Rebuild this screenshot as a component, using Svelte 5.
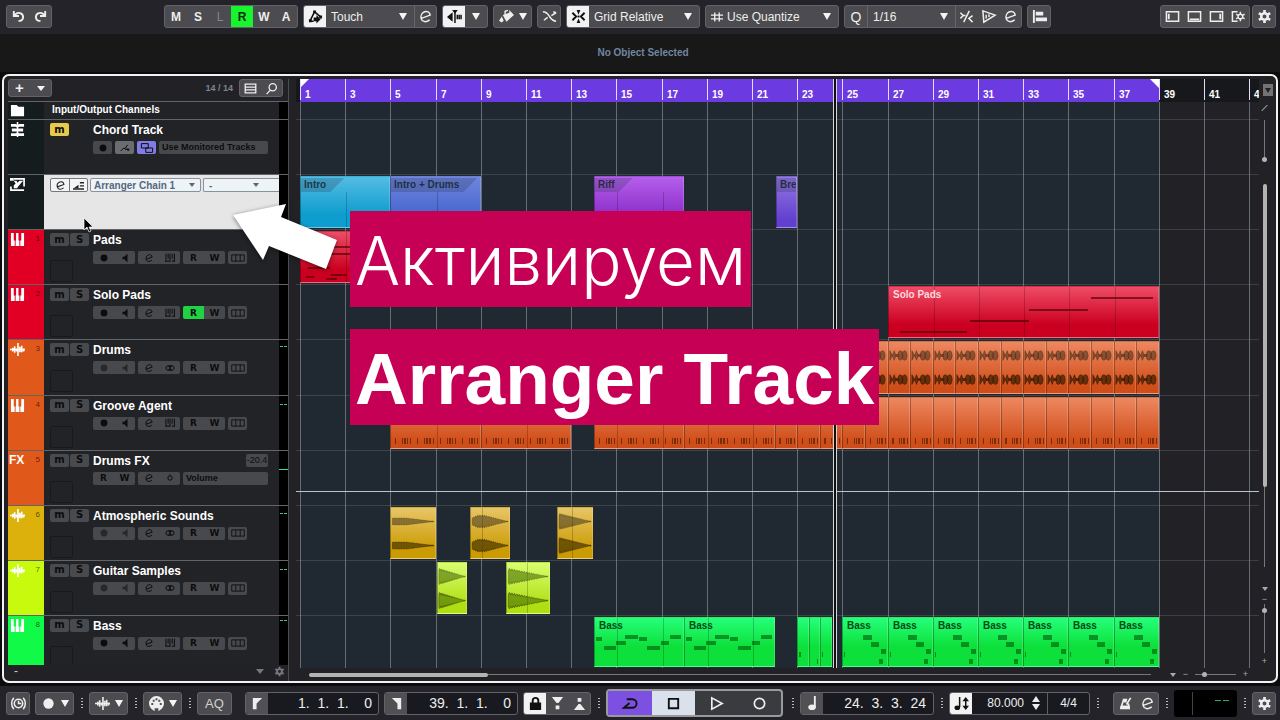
<script>
  // stroke (s), stroke width (w) and fill (f) shapes on a 16 unit grid
  const icons = {
    undo: { w: 2, s: 'M3 2v5.500h5.500M3.500 7.500C5 4.500 8 3.500 10.500 4.700c3.300 1.600 3.300 6.600-.5 8H8' },
    redo: { w: 2, s: 'M13 2v5.500H7.500M12.500 7.500C11 4.500 8 3.500 5.500 4.700c-3.300 1.600-3.300 6.600.5 8H8' },
    edit: { s: 'M3.500 10L13 6.500C12.500 3 9.500 2 7 3C4 4.200 2.500 7.500 3.500 10.500C4.500 14 8.500 14.500 12.500 11.500' },
    touch: { s: 'M2 13L7 3L14 9M2 13h4', f: 'M5.500 1.500h3v3h-3zM1 11h3v3H1zM12 7h3v3h-3zM6 9h3V6.500l4.500 4.500L9 15.500V13H6z' },
    snapLeft: { s: 'M8.500 3v12M11 6v5M13 6v5M15 6v5', f: 'M0 8.500l6-5v10zM5.500 1h6l-3 4z' },
    paint: { w: 1.5, s: 'M6.500 6V2.500l3-1', f: 'M4 6.500L11 4V1l5 5.500-8 7zM0 12.500l3-4.500 2 4.500-2 2z' },
    curve: { s: 'M1 3c4 0 5 2 7 5s4 5 7 5M10 7l5-3M15 4l-3-1M6 9l-4 3' },
    snap: { w: 2, s: 'M1.500 4l4 4-4 4M14.500 4l-4 4 4 4M8 7v2', f: 'M6 1h4L8 6zM6 15h4L8 10z' },
    hash: { w: 1.8, s: 'M5 2v12M11 2v12M0 5.500h16M0 10.500h16' },
    swing: { s: 'M11 2L5 14M1.500 4l3 3-3 3M5 7h2M14.500 7l-4 3 4 4' },
    iterate: { s: 'M2 2l13 4.500L3 14zM5.500 6v4M8.500 5.500v3' },
    align: { s: 'M2 1v14', w: 2, f: 'M4 3h8v4H4zM4 9h12v4H4z' },
    zoneLeft: { s: 'M1.500 3h13v10h-13z', f: 'M3 5h2v6H3z' },
    zoneLow: { s: 'M1.500 3h13v10h-13z', f: 'M3 10h10v2H3z' },
    zoneRight: { s: 'M1.500 3h13v10h-13z', f: 'M11 5h2v6h-2z' },
    zoneSetup: { s: 'M7 3H1.500v10H7M10 5.500a2.500 2.500 0 1 1 0 5a2.500 2.500 0 1 1 0-5M10 3v2M10 11v2M13 6.500l1.500-1M13 9.500l1.500 1M7 6.500l-1.500-1M7 9.500l-1.500 1' },
    gear: { w: 2.8, s: 'M8 4.500a3.500 3.500 0 1 1 0 7a3.500 3.500 0 1 1 0-7M8 1v3M8 12v3M2 4.500l2.500 1.500M11.500 10l2.500 1.500M14 4.500L11.500 6M4.500 10L2 11.500' },
    list: { s: 'M1.500 2.500h13v11h-13zM2 6.200h12M2 9.800h12' },
    search: { s: 'M9.500 2a4.500 4.500 0 1 1 0 9a4.500 4.500 0 1 1 0-9M6.500 10L2 15' },
    folder: { f: 'M1 2h6l2 2h6v10H1z' },
    chord: { s: 'M8 0v16', f: 'M1 2h5l2 1 2-1h5v3h-5L8 6 6 5H1zM2 7h12v3H2zM1 12h5l2-1 2 1h5v3H1z' },
    arranger: { w: 1.8, s: 'M1 10v4h14M4 2h11v8', f: 'M0 1h4v3H0zM4 4h3l1 2 2-2h4L8 11v1H4V9l2-2z' },
    piano: { f: 'M1 1h3v8h1v6H1zM6.500 1H9v8h1v6H6V9h.5zM12 1h3v14h-4V9h1z' },
    wave: { w: 1.7, s: 'M0 8h16M3 6v4M5 4.500v7M7 7v3M8.500 1v14M10.500 5v6M12.500 4v7M14.500 7v3' },
    keys: { s: 'M1.500 1v13M5 1v8M8 1v13M11.500 1v8M15 1v13M1 13h7M11 13h4' },
    rec: { f: 'M8 2.500a5.500 5.500 0 1 1 0 11a5.500 5.500 0 1 1 0-11' },
    speaker: { f: 'M4 6h3l5-5v14L7 10H4z' },
    stereo: { s: 'M5 4.500a3.500 3.500 0 1 1 0 7a3.500 3.500 0 1 1 0-7M11 4.500a3.500 3.500 0 1 1 0 7a3.500 3.500 0 1 1 0-7M5 4.500h6M5 11.500h6' },
    mono: { s: 'M8 4.500a3.500 3.500 0 1 1 0 7a3.500 3.500 0 1 1 0-7M8 2v2' },
    lanes: { w: 1.4, s: 'M-2 3h20v10H-2zM4.500 3v10M11.500 3v10' },
    link: { s: 'M-1 1h11v7H-1zM6 8h11v7H6z' },
    lines: { s: 'M1 13l5-5 2 1 4-6M8 10h5', f: 'M10 9h6l-3 4z' },
    steps: { w: 2, s: 'M0 13h16M10 4h6M10 8.500h6', f: 'M1 12l7-5v5z' },
    clock: { s: 'M8 3.500a4.500 4.500 0 1 1 0 9a4.500 4.500 0 1 1 0-9M8 5v3h3M3 2C0 5 0 11 3 14M13 2c3 3 3 9 0 12' },
    midi: { f: 'M8 0a8 8 0 1 1 0 16a8 8 0 1 1 0-16zM2.500 7.500v2h2v-2zM11.500 7.500v2h2v-2zM4 4v2h2V4zM10 4v2h2V4zM7 2.500v2h2v-2zM6 13v3h4v-3z' },
    flagLeft: { f: 'M3 2h10L7 8v6H3z' },
    flagRight: { f: 'M3 2h10v12H9V8z' },
    lock: { w: 2, s: 'M5 8V5a3 3 0 0 1 6 0v3', f: 'M2 7h12v8H2z' },
    punchIn: { f: 'M2 1h12L9 7.500H7zM6 10h4v4H6z' },
    punchOut: { f: 'M2 15h12L9 8.500H7zM6 2h4v4H6z' },
    cycle: { w: 2, s: 'M4 3.500h6a4.500 4.500 0 0 1 0 9H1L7 7.500' },
    stop: { w: 2, s: 'M3 3h10v10H3z' },
    play: { w: 1.8, s: 'M3 2l11 6-11 6z' },
    record: { w: 1.8, s: 'M8 2.500a5.500 5.500 0 1 1 0 11a5.500 5.500 0 1 1 0-11' },
    note: { w: 2, s: 'M10.500 0v12', f: 'M11.500 12a4 3 0 1 1-8 0a4 3 0 1 1 8 0' },
    tempo: { s: 'M6 1v11M12.500 4v8', f: 'M6.500 12.500a3 2.500 0 1 1-6 0a3 2.500 0 1 1 6 0M9 5.500l3.500-4.500L16 5.500zM9 10.500l3.500 4.500 3.500-4.500z' },
    metronome: { w: 1.8, s: 'M6 4L3 13M13.500 2L9 9M11 8l1 5', f: 'M5 3h5l-1 4H6zM3 10h9l1 4H2z' },
  }

  const tracks = [
    { no: 1, name: 'Pads', type: 'midi', color: 'red', meter: 0 },
    { no: 2, name: 'Solo Pads', type: 'midi', color: 'red', meter: 0, read: true },
    { no: 3, name: 'Drums', type: 'audio', color: 'orange', meter: 6 },
    { no: 4, name: 'Groove Agent', type: 'midi', color: 'orange', meter: 8 },
    { no: 5, name: 'Drums FX', type: 'fx', color: 'orange', meter: 18 },
    { no: 6, name: 'Atmospheric Sounds', type: 'audio', color: 'amber', meter: 7 },
    { no: 7, name: 'Guitar Samples', type: 'audio', color: 'lime', meter: 8 },
    { no: 8, name: 'Bass', type: 'midi', color: 'green', meter: 4 },
  ]

  const bars = Array.from({ length: 22 }, (_, i) => i * 2 + 1)
  const barX = (bar) => 4 + Math.round(((bar - 1) * 113) / 5)
  const span = (a, b, step = 1) =>
    Array.from({ length: Math.round((b - a) / step) }, (_, i) => [a + i * step, a + (i + 1) * step])

  // notes: left %, top px, width %
  const soloNotes = [[4, 44, 25], [30, 33, 22], [52, 22, 22], [75, 10, 23]]
  const padNotes = [[10, 14, 30], [14, 21, 40], [3, 44, 4], [4, 35, 12], [17, 42, 8], [14, 46, 6], [30, 26, 12]]
  const bassLong = [[1, 19, 7], [10, 28, 14], [24, 23, 11], [34, 17, 15], [50, 19, 9], [59, 28, 15], [75, 23, 9], [85, 17, 13]]
  const bassShort = [[45, 17, 20], [63, 24, 18], [87, 31, 10], [81, 41, 9], [3, 34, 2]]

  const ev = (lane, a, b, kind, label = '', extra = {}) => ({ lane, a, b, kind, label, ...extra })

  const events = [
    ev(2, 1, 5, 'sky', 'Intro', { tab: true }),
    ev(2, 5, 9, 'blue', 'Intro + Drums', { tab: true }),
    ev(2, 14, 18, 'violet', 'Riff', { tab: true }),
    ev(2, 22.05, 23, 'purple', 'Bre', { tab: true }),
    ev(3, 1, 9, 'red', '', { notes: padNotes }),
    ev(4, 27, 39, 'red', 'Solo Pads', { notes: soloNotes }),
    ...span(5, 39).map(([a, b]) => ev(5, a, b, 'orange', '', { beat: true })),
    ev(6, 5, 9, 'orange', '', { hits: 8 }),
    ev(6, 9, 13, 'orange', '', { hits: 8 }),
    ev(6, 14, 18, 'orange', '', { hits: 8 }),
    ev(6, 18, 22, 'orange', '', { hits: 8 }),
    ...span(22, 39).map(([a, b]) => ev(6, a, b, 'orange', '', { hits: 2 })),
    ev(8, 5, 7, 'amber', '', { env: 'soft' }),
    ev(8, 8.5, 10.3, 'amber', '', { env: 'swell' }),
    ev(8, 12.35, 13.95, 'amber', '', { env: 'pluck' }),
    ev(9, 7.05, 8.4, 'lime', '', { env: 'pluck' }),
    ev(9, 10.1, 12.05, 'lime', '', { env: 'pluck' }),
    ev(10, 14, 18, 'green', 'Bass', { notes: bassLong }),
    ev(10, 18, 22, 'green', 'Bass', { notes: bassLong }),
    ev(10, 23, 23.5, 'green', '', { notes: [[12, 34, 14]], tall: true }),
    ev(10, 23.5, 24, 'green', '', { notes: [[75, 41, 18]], tall: true }),
    ev(10, 24, 24.55, 'green', '', { notes: [[12, 34, 12]], tall: true }),
    ...span(25, 39, 2).map(([a, b]) => ev(10, a, b, 'green', 'Bass', { notes: bassShort, tall: true })),
  ]

  const innerBars = (e) => bars.filter((b) => b > e.a + 0.2 && b < e.b - 0.2)

  // decaying waveform outline around y = mid, 100 units wide
  function envelope(kind, mid) {
    const top = []
    const bottom = []
    for (let i = 0; i <= 48; i++) {
      const t = i / 48
      const jag = i % 3 ? 1 : 0.72
      let amp = 8.5 * (1 - t) * jag
      if (kind === 'soft') amp = 3.6 * (1 - Math.max(0, t - 0.35) / 0.65) * (i % 3 ? 1 : 0.85)
      if (kind === 'swell') amp = 6.5 * Math.min(1, 0.6 + t * 2.5) * (t < 0.35 ? 1 : (1 - t) / 0.65) * jag
      amp = Math.max(0.5, amp)
      const x = 3 + t * 94
      top.push(`${x.toFixed(1)} ${(mid - amp).toFixed(1)}`)
      bottom.unshift(`${x.toFixed(1)} ${(mid + amp).toFixed(1)}`)
    }
    return `M${top.join('L')}L${bottom.join('L')}Z`
  }

  const beatPath = (y) =>
    `M1 ${y - 5}l3 5-3 5zM4 ${y}l2-5 2 5-2 5zM8 ${y - 1}h3v2h-3z` +
    `M10 ${y}l1-4 2-1 2 1 1 4-1 4-2 1-2-1zM15 ${y}l1-4 2-1 2 1 1 4-1 4-2 1-2-1z`

  const dots = [1, 2, 3, 4]
</script>

{#snippet icon(name, cls = '')}
  <svg class="icon {cls}" viewBox="0 0 16 16" aria-hidden="true">
    {#if icons[name].s}<path class="line" stroke-width={icons[name].w ?? 1.6} d={icons[name].s} />{/if}
    {#if icons[name].f}<path class="solid" fill-rule="evenodd" d={icons[name].f} />{/if}
  </svg>
{/snippet}

{#snippet btn(name, label, cls = '')}
  <button class="tool {cls}" aria-label={label}>{@render icon(name)}</button>
{/snippet}

{#snippet grip()}
  <span class="grip">{#each dots as d (d)}<i></i>{/each}</span>
{/snippet}

{#snippet pair(a, b, cls = '')}
  <div class="pair {cls}">
    <button aria-label={a}>{@render icon(a)}</button>
    <button aria-label={b}>{@render icon(b)}</button>
  </div>
{/snippet}

<div class="daw">
  <header class="toolbar">
    <div class="group">
      {@render btn('undo', 'Undo')}
      {@render btn('redo', 'Redo')}
    </div>
    <div class="group states">
      {#each ['M', 'S', 'L', 'R', 'W', 'A'] as s (s)}
        <button class="tool" class:on={s === 'R'} class:dim={s === 'L'}>{s}</button>
      {/each}
    </div>
    <div class="group">
      {@render btn('touch', 'Automation follows events', 'lit')}
      <label class="drop"><select aria-label="Automation mode"><option>Touch</option></select></label>
      {@render btn('edit', 'Automation panel', 'sep')}
    </div>
    <div class="group">
      {@render btn('snapLeft', 'Auto-scroll', 'lit')}
      <button class="tool" aria-label="Auto-scroll options"><span class="tri"></span></button>
    </div>
    <div class="group">
      <button class="tool wide" aria-label="Colorize">{@render icon('paint')}<span class="tri"></span></button>
    </div>
    <div class="group">{@render btn('curve', 'Snap to zero crossing')}</div>
    <div class="group">
      {@render btn('snap', 'Snap', 'lit')}
      <label class="drop long"><select aria-label="Snap type"><option>Grid Relative</option></select></label>
    </div>
    <div class="group">
      <label class="drop grid">{@render icon('hash')}<select aria-label="Grid type"><option>Use Quantize</option></select></label>
    </div>
    <div class="group">
      <button class="tool q">Q</button>
      <label class="drop sep"><select aria-label="Quantize preset"><option>1/16</option></select></label>
      {@render btn('swing', 'Soft quantize', 'sep')}
      {@render btn('iterate', 'Iterative quantize')}
      {@render btn('edit', 'Quantize panel')}
    </div>
    <div class="group">{@render btn('align', 'Audio alignment')}</div>
    <div class="group right">
      {@render btn('zoneLeft', 'Left zone')}
      {@render btn('zoneLow', 'Lower zone')}
      {@render btn('zoneRight', 'Right zone')}
      {@render btn('zoneSetup', 'Window layout')}
    </div>
    <div class="group last">{@render btn('gear', 'Set up toolbar')}</div>
  </header>

  <div class="info">No Object Selected</div>

  <main class="project">
    <section class="list">
      <div class="list-head">
        <div class="group small">
          <button class="tool" aria-label="Add track"><span class="plus">+</span></button>
          <button class="tool" aria-label="Track presets"><span class="tri flat"></span></button>
        </div>
        <span class="count">14 / 14</span>
        <div class="group small">
          {@render btn('list', 'Track visibility')}
          {@render btn('search', 'Find tracks')}
        </div>
      </div>

      <ul class="tracks">
        <li class="track io">
          <div class="strip dark">{@render icon('folder')}</div>
          <div class="body"><h2>Input/Output Channels</h2></div>
          <div class="meter"></div>
        </li>
        <li class="track">
          <div class="strip dark">{@render icon('chord')}</div>
          <div class="body">
            <button class="mute">m</button>
            <div class="main">
              <h2>Chord Track</h2>
              <div class="controls">
                <button class="chip" aria-label="Record">{@render icon('rec')}</button>
                <button class="chip light" aria-label="Lines">{@render icon('lines')}</button>
                <button class="chip active" aria-label="Linked">{@render icon('link')}</button>
                <button class="field">Use Monitored Tracks</button>
              </div>
            </div>
          </div>
          <div class="meter"></div>
        </li>
        <li class="track selected">
          <div class="strip dark">{@render icon('arranger')}</div>
          <div class="body">
            <div class="chain-tools">
              <button aria-label="Edit chain">{@render icon('edit')}</button>
              <button aria-label="Activate arranger">{@render icon('steps')}</button>
            </div>
            <label class="chain"><select aria-label="Chain"><option>Arranger Chain 1</option></select></label>
            <label class="chain jump"><select aria-label="Jump mode"><option>-</option></select></label>
          </div>
          <div class="meter"></div>
        </li>
        {#each tracks as t (t.no)}
          <li class="track">
            <div class="strip {t.color}">
              {#if t.type === 'fx'}<b>FX</b>{:else}{@render icon(t.type === 'midi' ? 'piano' : 'wave')}{/if}
              <small>{t.no}</small>
            </div>
            <div class="body">
              <div class="side">
                <div class="ms"><button>m</button><button>S</button></div>
                <div class="thumb"></div>
              </div>
              <div class="main">
                <div class="title"><h2>{t.name}</h2>{#if t.type === 'fx'}<output>-20.4</output>{/if}</div>
                <div class="controls">
                  {#if t.type !== 'fx'}
                    {@render pair('rec', 'speaker', t.type === 'audio' ? 'off' : '')}
                    {@render pair('edit', t.type === 'midi' ? 'keys' : 'stereo')}
                  {/if}
                  <div class="pair rw"><button class:read={t.read}>R</button><button>W</button></div>
                  {#if t.type === 'fx'}
                    {@render pair('edit', 'mono')}
                    <button class="field">Volume</button>
                  {:else}
                    <button class="chip" aria-label="Lanes">{@render icon('lanes')}</button>
                  {/if}
                </div>
              </div>
            </div>
            <div class="meter">
              {#if t.meter}<span class="level" class:solid={t.type === 'fx'} style:margin-top="{t.meter}px"></span>{/if}
            </div>
          </li>
        {/each}
      </ul>
      <div class="list-foot">
        <span>-</span>
        <span class="tri flat faint"></span>
        {@render icon('gear')}
      </div>
    </section>

    <section class="timeline">
      <div class="ruler">
        <div class="cycle" style:left="{barX(1)}px" style:width="{barX(39) - barX(1)}px"></div>
        {#each bars as bar (bar)}
          <span class="tick" style:left="{barX(bar)}px">{bar}</span>
        {/each}
      </div>
      <div class="arrange">
        <div class="zone" style:left="{barX(1)}px" style:width="{barX(39) - barX(1)}px"></div>
        {#each bars as bar (bar)}
          <div class="gridline" style:left="{barX(bar)}px"></div>
        {/each}
        <div class="lanes">
          {#each { length: 11 } as _, lane}
            <div class="lane">
              {#each events.filter((e) => e.lane === lane) as e}
                <div
                  class="event {e.kind}"
                  class:tall={e.tall}
                  style:left="{barX(e.a)}px"
                  style:width="{barX(e.b) - barX(e.a)}px"
                >
                  {#each innerBars(e) as b (b)}
                    <i class="split" class:low={e.tab} style:left="{barX(b) - barX(e.a)}px"></i>
                  {/each}
                  {#each e.notes ?? [] as [nx, ny, nw]}
                    <i class="note" style:left="{nx}%" style:top="{ny}px" style:width="{nw}%"></i>
                  {/each}
                  {#if e.beat}
                    <svg viewBox="0 0 23 52" preserveAspectRatio="none">
                      <path class="upper" d={beatPath(14)} /><path class="lower" d={beatPath(39)} />
                    </svg>
                  {/if}
                  {#if e.env}
                    <svg viewBox="0 0 100 52" preserveAspectRatio="none">
                      <path class="upper" d={envelope(e.env, 14)} /><path class="lower" d={envelope(e.env, 39)} />
                    </svg>
                  {/if}
                  {#if e.hits}
                    <div class="hits">
                      {#each { length: e.hits } as _, h}<span class:dense={h % 2}></span>{/each}
                    </div>
                  {/if}
                  {#if e.label}<span class="label" class:tab={e.tab}>{e.label}</span>{/if}
                </div>
              {/each}
            </div>
          {/each}
        </div>
        <div class="crosshair"></div>
      </div>
      <div class="playhead" style:left="{barX(24.6)}px"></div>
      <div class="hscroll">
        <div class="rail"><div class="grab"></div></div>
        <span class="tri flat tiny"></span>
        <button class="zoom">−</button>
        <input type="range" value="20" aria-label="Horizontal zoom" />
        <button class="zoom">+</button>
      </div>
    </section>

    <aside class="vscroll">
      <button class="presets" aria-label="Zoom presets"><span class="tri flat ink"></span></button>
      <span class="slash"></span>
      <input type="range" value="0" aria-label="Waveform zoom" />
      <div class="rail"><div class="grab"></div></div>
      <span class="tri flat tiny"></span>
      <button class="zoom">−</button>
      <input class="trackzoom" type="range" value="90" aria-label="Vertical zoom" />
      <button class="zoom">+</button>
    </aside>
  </main>

  <footer class="transport">
    <div class="group">{@render btn('clock', 'Constrain delay')}</div>
    <div class="group"><button class="tool wide" aria-label="Record mode">{@render icon('rec')}<span class="tri"></span></button></div>
    {@render grip()}
    <div class="group"><button class="tool wide" aria-label="Audio record mode">{@render icon('wave')}<span class="tri"></span></button></div>
    {@render grip()}
    <div class="group"><button class="tool wide" aria-label="MIDI record mode">{@render icon('midi')}<span class="tri"></span></button></div>
    {@render grip()}
    <div class="group"><button class="tool aq">AQ</button></div>
    <div class="group locator first">
      {@render btn('flagLeft', 'Go to left locator')}
      <input aria-label="Left locator" value="1.  1.  1.    0" />
    </div>
    <div class="group locator">
      {@render btn('flagRight', 'Go to right locator')}
      <input aria-label="Right locator" value="39.  1.  1.    0" />
    </div>
    <div class="group">
      {@render btn('lock', 'Lock punch', 'lit')}
      {@render btn('punchIn', 'Punch in')}
      {@render btn('punchOut', 'Punch out')}
    </div>
    {@render grip()}
    <div class="play">
      <button class="cycle-on" aria-label="Cycle">{@render icon('cycle')}</button>
      <button class="stopped" aria-label="Stop">{@render icon('stop')}</button>
      <button aria-label="Play">{@render icon('play')}</button>
      <button aria-label="Record">{@render icon('record')}</button>
    </div>
    {@render grip()}
    <div class="group locator position">
      {@render btn('note', 'Time format')}
      <input aria-label="Position" value="24.  3.  3.  24" />
    </div>
    {@render grip()}
    <div class="group tempo">
      {@render btn('tempo', 'Tempo track', 'lit')}
      <input aria-label="Tempo" value="80.000" />
      <span class="spin"><i></i><i></i></span>
      <input class="sig" aria-label="Time signature" value="4/4" />
    </div>
    {@render grip()}
    <div class="group first">
      {@render btn('metronome', 'Metronome')}
      {@render btn('edit', 'Metronome setup')}
    </div>
    {@render grip()}
    <div class="output"><i></i><span></span></div>
    {@render grip()}
    <div class="group last">{@render btn('gear', 'Set up transport')}</div>
  </footer>

  <svg class="pointer" viewBox="0 0 10 16" aria-hidden="true">
    <path d="M1 1v12l3-3L6 15l2-1-2-4h4z" />
  </svg>
  <svg class="arrow" viewBox="0 0 108 70" aria-hidden="true">
    <path d="M2 13L55 2L50 15L106 38L95 67L38 44L32 58Z" />
  </svg>
  <div class="caption">
    <p class="thin">Активируем</p>
    <p class="strong">Arranger Track</p>
  </div>
</div>

<style>
  :global(body) {
    background: #000;
  }

  .daw {
    position: relative;
    display: flex;
    flex-direction: column;
    min-width: 1280px;
    min-height: 100vh;
    overflow: hidden;
    font-family: 'Liberation Sans', Arial, sans-serif;
    font-size: 12px;
    color: #eee;
    background: #0b0b0c;
  }

  .daw * {
    box-sizing: border-box;
  }

  button,
  input,
  select {
    font: inherit;
    color: inherit;
    background: none;
    border: 0;
    margin: 0;
    padding: 0;
    min-width: 0;
  }

  select {
    appearance: none;
    outline: none;
  }

  h2,
  p,
  ul {
    margin: 0;
    padding: 0;
  }

  .icon {
    display: block;
    flex: none;
    width: 15px;
    height: 15px;
    overflow: visible;
  }

  .small .icon {
    width: 13px;
    height: 13px;
  }

  .icon .line {
    fill: none;
    stroke: currentColor;
  }

  .icon .solid {
    fill: currentColor;
  }

  .tri {
    border: 4px solid transparent;
    border-top: 7px solid #f4f4f4;
    border-bottom: 0;
  }

  .tri.flat {
    border-top-width: 5px;
  }

  .tri.tiny {
    border-width: 3px;
    border-top: 4px solid #aaa;
    border-bottom: 0;
  }

  .tri.faint {
    border-top-color: #77787b;
  }

  .tri.ink {
    border-top-color: #222;
  }

  /* toolbars */
  .toolbar,
  .transport {
    display: flex;
    align-items: center;
    height: 34px;
    gap: 5px;
    padding: 0 4px 0 6px;
    background: #232329;
  }

  .toolbar {
    padding-bottom: 1px;
  }

  .group {
    display: flex;
    flex: none;
    height: 23px;
    border: 1px solid #626268;
    border-radius: 3px;
    background: #4b4b50;
    overflow: hidden;
  }

  .tool {
    display: flex;
    align-items: center;
    justify-content: center;
    width: 22px;
    height: 100%;
  }

  .tool.wide {
    width: 37px;
    gap: 5px;
  }

  .tool.lit {
    background: #f2f2f2;
    color: #111;
  }

  .tool.on {
    background: #19f52c;
    color: #0a2a0c;
  }

  .tool.dim {
    color: #85858a;
    font-weight: normal;
  }

  .tool.q {
    font-size: 14px;
  }

  .sep {
    border-left: 1px solid #66666b;
  }

  .states {
    margin-left: 107px;
    font-weight: bold;
  }

  .drop {
    position: relative;
    display: flex;
    align-items: center;
    width: 88px;
    padding-left: 5px;
  }

  .drop.long {
    width: 110px;
  }

  .drop.grid {
    width: 132px;
    gap: 4px;
  }

  .drop.grid .icon {
    width: 12px;
    height: 12px;
  }

  .drop select {
    flex: 1;
  }

  .drop::after {
    content: '';
    position: absolute;
    right: 7px;
    border: 4px solid transparent;
    border-top: 7px solid #f4f4f4;
    border-bottom: 0;
    pointer-events: none;
  }

  .right {
    margin-left: auto;
  }

  .toolbar .last {
    margin-left: -3px;
  }

  .info {
    height: 38px;
    line-height: 38px;
    padding-left: 6px;
    text-align: center;
    font-size: 10px;
    font-weight: bold;
    color: #7186a0;
    background: #181818;
  }

  /* project window */
  .project {
    display: flex;
    flex: 1;
    margin: 2px 2px 3px;
    padding: 3px 0 0 4px;
    border: 2px solid #f2f2f2;
    border-radius: 7px;
    background: #222226;
    overflow: hidden;
  }

  .list {
    display: flex;
    flex-direction: column;
    width: 281px;
    border-right: 1px solid #4c4d50;
  }

  .list-head {
    display: flex;
    align-items: flex-start;
    height: 22px;
    padding-right: 5px;
  }

  .group.small {
    height: 18px;
  }

  .small .tool {
    width: 21px;
  }

  .plus {
    font-size: 15px;
    font-weight: bold;
    line-height: 14px;
  }

  .count {
    margin: 0 6px 0 auto;
    font-size: 9px;
    font-weight: bold;
    line-height: 18px;
    color: #7d8590;
  }

  .tracks {
    display: grid;
    flex: 1;
    grid-template-rows: 18px repeat(9, minmax(40px, 1fr)) 50px;
    list-style: none;
  }

  .track {
    display: flex;
    min-height: 0;
    border-top: 1px solid #626467;
    background: #222327;
    overflow: hidden;
  }

  .strip {
    display: flex;
    flex: none;
    justify-content: space-between;
    align-items: flex-start;
    width: 36px;
    padding: 2px 4px 0 2px;
    color: #fff;
  }

  .io .strip {
    padding-top: 1px;
  }

  .strip b {
    font-size: 12px;
    line-height: 15px;
    margin-left: -1px;
  }

  .strip small {
    font-size: 8px;
    line-height: 14px;
    color: rgba(0, 0, 0, 0.6);
  }

  .strip.dark {
    background: #141c1d;
  }

  .strip.red {
    background: #e10024;
  }

  .strip.orange {
    background: #e0591b;
  }

  .strip.amber {
    background: #dcb10c;
  }

  .strip.lime {
    background: #c8fa0e;
  }

  .strip.green {
    background: #12fa48;
  }

  .body {
    display: flex;
    flex: 1;
    min-width: 0;
    padding: 3px 0 0 6px;
  }

  .main {
    flex: 1;
    min-width: 0;
    padding-right: 11px;
  }

  h2 {
    font-size: 12px;
    line-height: 14px;
    color: #fff;
    white-space: nowrap;
  }

  .io .body {
    padding: 1px 0 0 8px;
  }

  .io h2 {
    font-size: 10px;
  }

  .side {
    flex: none;
    width: 43px;
  }

  .ms {
    display: flex;
    gap: 1px;
    margin-right: 4px;
  }

  .ms button,
  .mute {
    width: 19px;
    height: 13px;
    border-radius: 2px;
    background: #494a4d;
    color: #0c0c0c;
    font-family: 'DejaVu Sans', sans-serif;
    font-size: 10px;
    font-weight: bold;
    line-height: 12px;
  }

  .mute {
    flex: none;
    margin-right: 24px;
    background: #e8c94c;
  }

  .thumb {
    width: 23px;
    height: 22px;
    margin-top: 14px;
    border: 1px solid #18191b;
    border-radius: 2px;
  }

  .title {
    display: flex;
    justify-content: space-between;
  }

  output {
    width: 22px;
    height: 13px;
    display: flex;
    justify-content: center;
    border-radius: 2px;
    background: #48494c;
    color: #0c0c0c;
    font-size: 9px;
    line-height: 13px;
  }

  .controls {
    display: flex;
    gap: 3px;
    margin-top: 4px;
    height: 13px;
    color: #0c0c0c;
  }

  .pair {
    display: flex;
    width: 42px;
    border-radius: 2px;
    background: #48494c;
    overflow: hidden;
  }

  .pair button,
  .chip {
    display: flex;
    align-items: center;
    justify-content: center;
    flex: 1;
  }

  .pair .icon,
  .chip .icon {
    width: 10px;
    height: 10px;
  }

  .pair.off button {
    color: #27282a;
  }

  .rw {
    font-family: 'DejaVu Sans', sans-serif;
    font-size: 9px;
    font-weight: bold;
  }

  .read {
    background: #21d243;
  }

  .chip {
    flex: none;
    width: 19px;
    border-radius: 2px;
    background: #48494c;
  }

  .chip.light {
    background: #6b6c6f;
  }

  .chip.active {
    background: #827de6;
  }

  .field {
    flex: 1;
    padding-left: 3px;
    border-radius: 2px;
    background: #48494c;
    font-size: 9px;
    font-weight: bold;
    line-height: 13px;
    text-align: left;
    white-space: nowrap;
  }

  .selected .body {
    background: #e6e6e6;
    color: #222;
    gap: 2px;
  }

  .chain-tools {
    display: flex;
    height: 14px;
    border: 1px solid #77787b;
    border-radius: 2px;
    background: #f2f4f5;
  }

  .chain-tools button {
    display: flex;
    align-items: center;
    justify-content: center;
    width: 18px;
  }

  .chain-tools button + button {
    border-left: 1px solid #77787b;
  }

  .chain-tools .icon {
    width: 11px;
    height: 11px;
  }

  .chain {
    position: relative;
    display: flex;
    align-items: center;
    width: 111px;
    height: 14px;
    padding-left: 3px;
    border: 1px solid #8791a0;
    border-radius: 2px;
    background: #eef3f6;
    color: #56677f;
    font-size: 10px;
    font-weight: bold;
  }

  .chain select {
    flex: 1;
  }

  .chain.jump {
    flex: 1;
    padding-left: 5px;
    border-right: 0;
    border-radius: 2px 0 0 2px;
  }

  .chain::after {
    content: '';
    position: absolute;
    right: 5px;
    border: 3px solid transparent;
    border-top: 4px solid #56677f;
    border-bottom: 0;
  }

  .chain.jump::after {
    right: 20px;
  }

  .meter {
    width: 9px;
    flex: none;
    background: #000;
  }

  .level {
    display: block;
    height: 1px;
    background: repeating-linear-gradient(90deg, transparent 0 1px, #43c98a 1px 4px);
  }

  .level.solid {
    background: #35dca0;
  }

  .list-foot {
    display: flex;
    align-items: center;
    height: 16px;
    gap: 13px;
    padding: 0 3px 4px 6px;
    color: #77787b;
  }

  .list-foot span:first-child {
    margin-right: auto;
    color: #ccc;
  }

  .list-foot .icon {
    width: 11px;
    height: 11px;
    margin-left: -3px;
  }

  /* timeline */
  .timeline {
    position: relative;
    display: flex;
    flex: 1;
    flex-direction: column;
    min-width: 0;
    margin-left: 7px;
    overflow: hidden;
  }

  .ruler {
    position: relative;
    height: 23px;
    background: #17181b;
    overflow: hidden;
  }

  .cycle {
    position: absolute;
    top: 0;
    bottom: 0;
    background: #6b3ae0;
  }

  .cycle::before,
  .cycle::after {
    content: '';
    position: absolute;
    top: 0;
    left: 0;
    border-top: 9px solid #fff;
    border-right: 9px solid transparent;
  }

  .cycle::after {
    left: auto;
    right: 0;
    border-right: 0;
    border-left: 9px solid transparent;
  }

  .tick {
    position: absolute;
    top: 0;
    height: 21px;
    padding: 10px 0 0 4px;
    border-left: 1px solid #e6dcff;
    font-size: 10px;
    font-weight: bold;
    line-height: 12px;
    color: #fff;
  }

  .arrange {
    position: relative;
    display: flex;
    flex: 1;
  }

  .zone {
    position: absolute;
    top: 0;
    bottom: 0;
    background: #202931;
  }

  .gridline {
    position: absolute;
    top: 0;
    bottom: 0;
    width: 1px;
    background: #666c72;
  }

  .lanes {
    position: relative;
    display: grid;
    flex: 1;
    grid-template-rows: 17px repeat(9, minmax(40px, 1fr)) 53px;
  }

  .lane {
    position: relative;
    min-height: 0;
    border-top: 1px solid rgba(150, 165, 175, 0.22);
  }

  .lane:first-child {
    border-top: 0;
  }

  .crosshair {
    position: absolute;
    left: 0;
    right: 0;
    top: 389px;
    height: 1px;
    background: #b9c4ca;
  }

  .playhead {
    position: absolute;
    top: 0;
    bottom: 13px;
    width: 4px;
    border: 1px solid #d6d6d6;
    border-width: 0 1px;
    background: #101010;
  }

  .event {
    position: absolute;
    top: 1px;
    bottom: 1px;
    border: 1px solid rgba(255, 255, 255, 0.18);
    border-left-color: rgba(0, 0, 0, 0.3);
    overflow: hidden;
  }

  .event svg {
    position: absolute;
    inset: 0;
    width: 100%;
    height: 100%;
  }

  .upper {
    fill: rgba(50, 40, 25, 0.5);
    stroke: rgba(40, 30, 10, 0.6);
    stroke-width: 0.6;
  }

  .lower {
    fill: rgba(60, 30, 0, 0.7);
    stroke: rgba(40, 20, 0, 0.9);
    stroke-width: 0.6;
  }

  .lime .upper,
  .lime .lower {
    fill: rgba(60, 100, 0, 0.55);
  }

  .amber .lower {
    fill: rgba(80, 60, 0, 0.75);
  }

  .event.sky {
    background: linear-gradient(#54bce2, #0e9dcf 75%);
  }

  .event.blue {
    background: linear-gradient(#7086dc, #4666cf 75%);
  }

  .event.violet {
    background: linear-gradient(#b55fec, #8729c4 85%);
  }

  .event.purple {
    background: linear-gradient(#9478e4, #6140cf 85%);
  }

  .event.red {
    background: linear-gradient(#ee4c66, #cb0020 75%);
  }

  .event.orange {
    background: linear-gradient(#ed8760, #cf4d18 88%);
  }

  .event.amber {
    background: linear-gradient(#e8c566, #ca9b02 85%);
  }

  .event.lime {
    background: linear-gradient(#d9fd70, #aedf10 85%);
  }

  .event.green {
    background: linear-gradient(#25ff7a, #0de03a 60%);
  }

  .split {
    position: absolute;
    top: 0;
    bottom: 0;
    width: 1px;
    background: rgba(0, 0, 0, 0.2);
  }

  .split.low {
    top: 15px;
  }

  .note {
    position: absolute;
    height: 4px;
    background: rgba(80, 0, 0, 0.65);
  }

  .red .note {
    height: 2px;
  }

  .green .note {
    background: rgba(0, 90, 10, 0.6);
  }

  .tall .note {
    height: 5px;
  }

  .hits {
    position: absolute;
    inset: auto 0 4px 0;
    display: flex;
    height: 6px;
  }

  .hits span {
    flex: 1;
    background: linear-gradient(
      90deg,
      transparent 35%,
      #7a2d08 35% 47%,
      transparent 47%
    );
  }

  .hits .dense {
    background: linear-gradient(
      90deg,
      #7a2d08 8%,
      transparent 8% 20%,
      #7a2d08 20% 34%,
      transparent 34% 44%,
      #7a2d08 44% 58%,
      transparent 58% 76%,
      #7a2d08 76% 86%,
      transparent 86%
    );
  }

  .label {
    position: absolute;
    top: 1px;
    left: 0;
    padding: 0 4px;
    font-size: 10px;
    font-weight: bold;
    line-height: 14px;
    color: rgba(15, 30, 40, 0.8);
    white-space: nowrap;
  }

  .label.tab {
    padding: 0 18px 0 3px;
    background: rgba(40, 50, 80, 0.25);
    clip-path: polygon(0 0, 100% 0, calc(100% - 14px) 100%, 0 100%);
  }

  .red .label {
    color: #ffd9de;
  }

  .green .label {
    color: #04491a;
  }

  .rail {
    position: relative;
    display: flex;
    flex: 1;
  }

  .grab {
    border-radius: 3px;
    background: #b4b3b1;
  }

  .hscroll {
    display: flex;
    align-items: center;
    height: 13px;
    gap: 6px;
    padding: 0 10px 0 13px;
  }

  .hscroll .rail {
    margin-right: 13px;
    background: linear-gradient(#77787b, #77787b) center / 100% 1px no-repeat;
  }

  .hscroll .grab {
    width: 179px;
    height: 4px;
  }

  .zoom {
    width: 7px;
    font-size: 9px;
    line-height: 9px;
    color: #aaa;
  }

  input[type='range'] {
    appearance: none;
    flex: none;
    width: 41px;
    height: 9px;
    background: linear-gradient(#77787b, #77787b) center / 100% 1px no-repeat;
  }

  input[type='range']::-webkit-slider-thumb {
    appearance: none;
    width: 5px;
    height: 5px;
    border-radius: 50%;
    background: #b4b4b4;
  }

  .vscroll {
    display: flex;
    flex-direction: column;
    align-items: center;
    width: 17px;
    padding: 5px 6px 15px 0;
  }

  .presets {
    display: flex;
    align-items: center;
    justify-content: center;
    align-self: flex-end;
    flex: none;
    width: 10px;
    height: 12px;
    margin-right: -3px;
    background: #737376;
  }

  .presets .tri {
    border-width: 3px;
    border-top-width: 5px;
    border-bottom: 0;
  }

  .slash {
    width: 1px;
    height: 8px;
    margin: 8px 0;
    background: #999;
    rotate: 45deg;
  }

  .vscroll input[type='range'] {
    writing-mode: vertical-lr;
    direction: rtl;
    width: 9px;
    height: 42px;
    background: linear-gradient(#77787b, #77787b) center / 1px 100% no-repeat;
  }

  .vscroll input.trackzoom {
    height: 49px;
  }

  .vscroll .rail {
    width: 4px;
    margin: 22px 0 20px;
    background: linear-gradient(#77787b, #77787b) center / 1px 100% no-repeat;
  }

  .vscroll .grab {
    width: 4px;
    height: 79%;
  }

  .vscroll .zoom {
    margin-top: 4px;
  }

  /* transport */
  .grip {
    display: flex;
    flex-direction: column;
    gap: 2px;
    width: 5px;
  }

  .grip i {
    width: 2px;
    height: 1px;
    margin: 0 auto;
    background: #bbb;
  }

  .aq {
    width: 33px;
    font-size: 13px;
    color: #d2d2d2;
  }

  .first {
    margin-left: 8px;
  }

  .locator,
  .tempo {
    background: #191a1f;
  }

  .locator .tool {
    background: #505055;
  }

  .locator input {
    width: 110px;
    padding-right: 6px;
    font-size: 14px;
    text-align: right;
  }

  .position input {
    padding-right: 7px;
  }

  .play {
    display: flex;
    flex: none;
    height: 28px;
    margin: 0 2px 0 0;
    border: 2px solid #9a9a9e;
    border-radius: 4px;
    background: #3a3b3f;
    overflow: hidden;
  }

  .play button {
    display: flex;
    align-items: center;
    justify-content: center;
    width: 43px;
  }

  .play .cycle-on {
    width: 44px;
    background: #7c50e0;
    color: #111;
  }

  .play .stopped {
    background: #d9e1ec;
    color: #111;
  }

  .tempo input {
    width: 52px;
    text-align: right;
  }

  .tempo .sig {
    width: 42px;
    border-left: 1px solid #5e5e64;
    text-align: center;
  }

  .spin {
    display: flex;
    flex-direction: column;
    justify-content: center;
    gap: 2px;
    width: 23px;
    align-items: center;
  }

  .spin i {
    border: 4px solid transparent;
    border-top: 6px solid #eee;
    border-bottom: 0;
  }

  .spin i:first-child {
    rotate: 180deg;
  }

  .output {
    display: flex;
    flex: 1;
    align-items: center;
    min-width: 60px;
    height: 27px;
    border-radius: 3px;
    background: #000;
  }

  .output i {
    width: 1px;
    height: 23px;
    margin-left: 18px;
    background: #444;
  }

  .output span {
    width: 14px;
    height: 1px;
    margin: 0 8px 6px auto;
    background: linear-gradient(90deg, #2fae72 45%, transparent 45% 55%, #2fae72 55%);
  }

  /* overlays */
  .pointer {
    position: absolute;
    left: 83px;
    top: 217px;
    width: 10px;
    height: 16px;
    fill: #000;
    stroke: #fff;
    stroke-width: 0.7;
  }

  .arrow {
    position: absolute;
    left: 231px;
    top: 202px;
    width: 108px;
    height: 70px;
    fill: #fff;
    filter: drop-shadow(0 1px 2px rgba(0, 0, 0, 0.5));
  }

  .caption {
    position: absolute;
    left: 350px;
    top: 211px;
    display: flex;
    flex-direction: column;
    align-items: flex-start;
    gap: 22px;
    color: #fff;
  }

  .caption p {
    height: 96px;
    padding: 0 5px;
    font-size: 73px;
    line-height: 100px;
    white-space: nowrap;
    background: #c50055;
  }

  .caption .thin {
    font-family: Inter, Roboto, 'Liberation Sans', sans-serif;
    font-size: 67px;
    font-weight: 300;
  }

  .caption .strong {
    font-weight: bold;
  }
</style>
